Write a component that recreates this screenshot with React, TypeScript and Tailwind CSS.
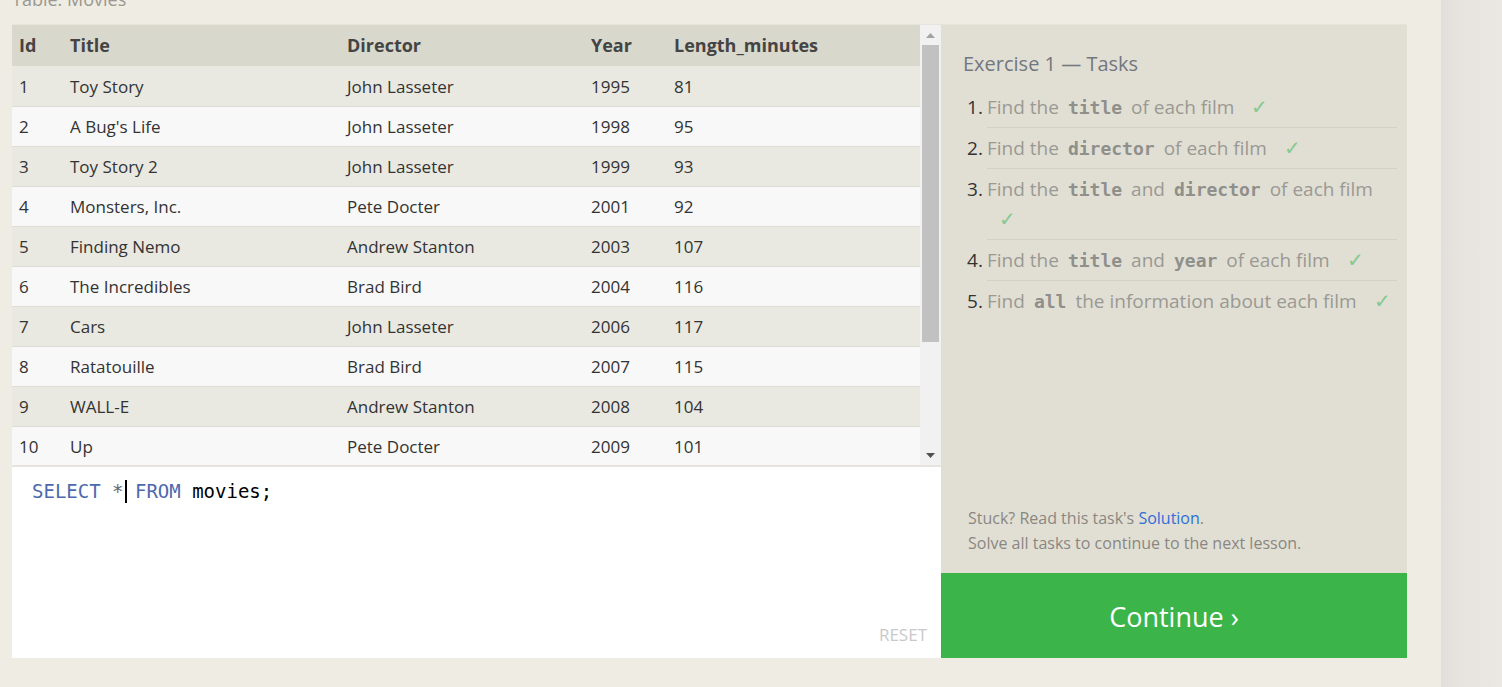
import React from "react";

const rows: [string, string, string, string, string][] = [
  ["1", "Toy Story", "John Lasseter", "1995", "81"],
  ["2", "A Bug's Life", "John Lasseter", "1998", "95"],
  ["3", "Toy Story 2", "John Lasseter", "1999", "93"],
  ["4", "Monsters, Inc.", "Pete Docter", "2001", "92"],
  ["5", "Finding Nemo", "Andrew Stanton", "2003", "107"],
  ["6", "The Incredibles", "Brad Bird", "2004", "116"],
  ["7", "Cars", "John Lasseter", "2006", "117"],
  ["8", "Ratatouille", "Brad Bird", "2007", "115"],
  ["9", "WALL-E", "Andrew Stanton", "2008", "104"],
  ["10", "Up", "Pete Docter", "2009", "101"],
  ["11", "Cars 2", "John Lasseter", "2011", "120"],
  ["12", "Brave", "Brenda Chapman", "2012", "102"],
  ["13", "Monsters University", "Dan Scanlon", "2013", "110"],
  ["14", "WALL-G", "Brenda Chapman", "2042", "92"],
];

const sans = "font-['Open_Sans','Noto_Sans',sans-serif]";

function Code({ children }: { children: React.ReactNode }) {
  return (
    <code className="mx-[9px] font-['DejaVu_Sans_Mono','Liberation_Mono',monospace] text-[18px] leading-[18px] font-bold text-[#8f8f8b]">
      {children}
    </code>
  );
}

function Check() {
  return <span className="ml-[12px] text-[20px] leading-[19px] text-[#86c991]">✓</span>;
}

function Task({ n, children, last }: { n: number; children: React.ReactNode; last?: boolean }) {
  return (
    <li className="flex">
      <span className="w-[20px] shrink-0 pt-[5px] text-[#333]">{n}.</span>
      <div className={`flex-1 pt-[5px] pb-[5px] ${last ? "" : "border-b border-[#d3d1c6]"}`}>{children}</div>
    </li>
  );
}

export default function App() {
  return (
    <div className={`flex h-[687px] w-full overflow-hidden bg-[#efece4] ${sans}`}>
      <div className="flex w-[1441px] shrink-0 flex-col px-[12px]">
        <div className="h-[24px] overflow-hidden">
          <div className="-mt-[13px] text-[18px] leading-[24px] text-[#9a9890]">Table: Movies</div>
        </div>
        <div className="flex">
          <div className="flex w-[929px] flex-col">
            <div className="flex h-[441px] border-t border-[#e6e4dc]">
              <div className="w-[908px] overflow-hidden">
                <table className="w-full table-fixed border-collapse text-left">
                  <colgroup>
                    <col className="w-[51px]" />
                    <col className="w-[277px]" />
                    <col className="w-[244px]" />
                    <col className="w-[83px]" />
                    <col />
                  </colgroup>
                  <thead>
                    <tr className="h-[41px] bg-[#d9d8cc] text-[18px] font-bold text-[#444]">
                      <th className="pl-[7px] font-bold">Id</th>
                      <th className="pl-[7px] font-bold">Title</th>
                      <th className="pl-[7px] font-bold">Director</th>
                      <th className="pl-[7px] font-bold">Year</th>
                      <th className="pl-[7px] font-bold">Length_minutes</th>
                    </tr>
                  </thead>
                  <tbody>
                    {rows.map((r, i) => (
                      <tr
                        key={r[0]}
                        className={`h-[40px] border-b border-[#dddcd5] text-[17px] text-[#333] ${
                          i % 2 === 0 ? "bg-[#e9e8e1]" : "bg-[#f8f8f8]"
                        }`}
                      >
                        {r.map((c, j) => (
                          <td key={j} className="pl-[7px] pt-[2px]">
                            {c}
                          </td>
                        ))}
                      </tr>
                    ))}
                  </tbody>
                </table>
              </div>
              <div className="flex w-[21px] flex-col bg-[#f1f1f1]">
                <div className="flex h-[20px] items-center justify-center">
                  <svg width="9" height="5" viewBox="0 0 9 5">
                    <path d="M4.5 0 L9 5 L0 5 Z" fill="#a3a3a3" />
                  </svg>
                </div>
                <div className="mx-[2px] h-[297px] bg-[#c1c1c1]" />
                <div className="flex-1" />
                <div className="flex h-[20px] items-center justify-center">
                  <svg width="9" height="5" viewBox="0 0 9 5">
                    <path d="M0 0 L9 0 L4.5 5 Z" fill="#505050" />
                  </svg>
                </div>
              </div>
            </div>
            <div className="h-[2px] bg-[#e6e4dc]" />
            <div className="relative h-[191px] bg-white">
              <div className="pl-[20px] pt-[12px] font-['DejaVu_Sans_Mono','Liberation_Mono',monospace] text-[19px] leading-[24px] whitespace-pre">
                <span className="text-[#4d69ad]">SELECT</span>
                <span className="text-[#666]"> *</span>
                <span className="relative inline-block w-0 align-top">
                  <span className="absolute left-[1px] top-[1px] h-[23px] w-[2px] bg-black" />
                </span>
                <span className="text-[#4d69ad]"> FROM</span>
                <span className="text-black"> movies;</span>
              </div>
              <div className="absolute bottom-[11px] right-[14px] text-[17px] text-[#c9c9c9]">RESET</div>
            </div>
          </div>
          <div className="flex w-[466px] flex-col">
            <div className="flex h-[549px] flex-col border-t border-[#e6e4dc] bg-[#e1dfd4] pl-[22px] pr-[10px]">
              <div className="mt-[25px] text-[20px] leading-[28px] text-[#727780]">Exercise 1 — Tasks</div>
              <ol className="mt-[9px] pl-[4px] text-[19px] leading-[30px] text-[#9a9993]">
                <Task n={1}>
                  Find the<Code>title</Code>of each film <Check />
                </Task>
                <Task n={2}>
                  Find the<Code>director</Code>of each film <Check />
                </Task>
                <Task n={3}>
                  Find the<Code>title</Code>and<Code>director</Code>of each film <Check />
                </Task>
                <Task n={4}>
                  Find the<Code>title</Code>and<Code>year</Code>of each film <Check />
                </Task>
                <Task n={5} last>
                  Find<Code>all</Code>the information about each film <Check />
                </Task>
              </ol>
              <div className="flex-1" />
              <div className="pb-[17px] pl-[5px] text-[16px] leading-[25px] text-[#8a8782]">
                <div>
                  Stuck? Read this task's <span className="text-[#2f6fd6]">Solution</span>.
                </div>
                <div>Solve all tasks to continue to the next lesson.</div>
              </div>
            </div>
            <div className="flex h-[85px] items-center justify-center bg-[#3bb54a] pt-[3px] text-[27px] text-white">
              Continue ›
            </div>
          </div>
        </div>
      </div>
      <div className="flex-1 bg-[linear-gradient(to_right,#e2dedb,#e7e4e0_30%,#ebe8e4)]" />
    </div>
  );
}
